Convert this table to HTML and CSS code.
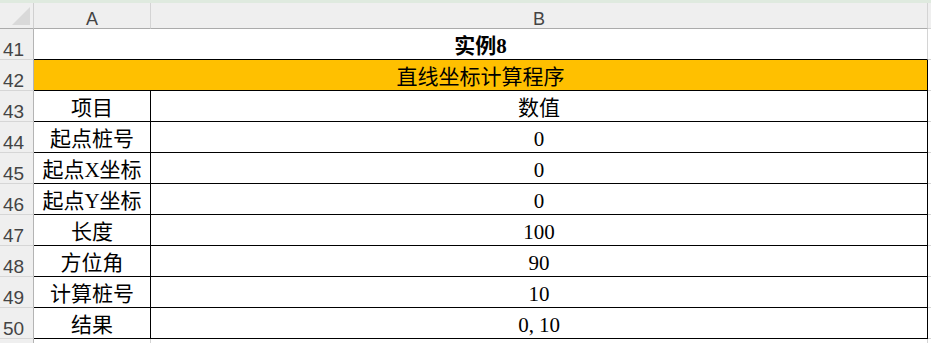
FILE: index.html
```html
<!DOCTYPE html>
<html lang="zh">
<head>
<meta charset="utf-8">
<title>直线坐标计算程序</title>
<link rel="stylesheet" href="styles.css">
</head>
<body>
<div class="strip"></div>
<div class="sheet">
  <div class="corner">
    <svg class="corner-tri" width="33" height="25" viewBox="0 0 33 25"><polygon points="30,4 30,22 12,22" fill="#d9d9d9"/></svg>
  </div>
  <div class="colhead">A</div>
  <div class="colhead">B</div>
  <div class="colhead rest"></div>

  <div class="rowhead">41</div>
  <div class="cell merged row41 bold">实例8</div>
  <div class="cell rest"></div>

  <div class="rowhead">42</div>
  <div class="cell merged row42">直线坐标计算程序</div>
  <div class="cell rest"></div>

  <div class="rowhead">43</div>
  <div class="cell boxed">项目</div>
  <div class="cell boxed">数值</div>
  <div class="cell rest"></div>

  <div class="rowhead">44</div>
  <div class="cell boxed">起点桩号</div>
  <div class="cell boxed">0</div>
  <div class="cell rest"></div>

  <div class="rowhead">45</div>
  <div class="cell boxed">起点X坐标</div>
  <div class="cell boxed">0</div>
  <div class="cell rest"></div>

  <div class="rowhead">46</div>
  <div class="cell boxed">起点Y坐标</div>
  <div class="cell boxed">0</div>
  <div class="cell rest"></div>

  <div class="rowhead">47</div>
  <div class="cell boxed">长度</div>
  <div class="cell boxed">100</div>
  <div class="cell rest"></div>

  <div class="rowhead">48</div>
  <div class="cell boxed">方位角</div>
  <div class="cell boxed">90</div>
  <div class="cell rest"></div>

  <div class="rowhead">49</div>
  <div class="cell boxed">计算桩号</div>
  <div class="cell boxed">10</div>
  <div class="cell rest"></div>

  <div class="rowhead">50</div>
  <div class="cell boxed">结果</div>
  <div class="cell boxed">0<span class="comma">,</span>10</div>
  <div class="cell rest"></div>

  <div class="rowhead"></div>
  <div class="cell plain"></div>
  <div class="cell plain"></div>
  <div class="cell rest"></div>
</div>
</body>
</html>
```

FILE: styles.css
```css
html, body {
  margin: 0;
  padding: 0;
  background: #ffffff;
  overflow: hidden;
}

.strip {
  height: 3px;
  background: #dfeadf;
}

.sheet {
  display: grid;
  grid-template-columns: 34px 117px 777px 1fr;
  grid-template-rows: 26px repeat(10, 31px) 20px;
  width: 931px;
}

.corner {
  background: #efefef;
  border-right: 1px solid #d0d0d0;
  border-bottom: 1px solid #ababab;
  box-sizing: border-box;
}

.corner-tri {
  display: block;
}

.colhead {
  background: #efefef;
  border-right: 1px solid #d4d4d4;
  border-bottom: 1px solid #ababab;
  box-sizing: border-box;
  display: flex;
  align-items: flex-end;
  justify-content: center;
  font-family: "Liberation Sans", Arial, sans-serif;
  font-size: 18px;
  line-height: 18px;
  color: #444444;
}

.colhead.rest {
  border-right: none;
}

.rowhead {
  background: #efefef;
  border-right: 1px solid #b4b4b4;
  border-bottom: 1px solid #d6d6d6;
  box-sizing: border-box;
  display: flex;
  align-items: flex-end;
  justify-content: flex-start;
  padding-left: 3px;
  font-family: "Liberation Sans", Arial, sans-serif;
  font-size: 19px;
  line-height: 19px;
  color: #444444;
}

.cell {
  box-sizing: border-box;
  display: flex;
  align-items: flex-end;
  justify-content: center;
  font-family: "Liberation Serif", "Noto Sans CJK SC", serif;
  font-size: 21px;
  line-height: 25px;
  color: #000000;
  white-space: nowrap;
}

.merged {
  grid-column: span 2;
}

.row41 {
  border-right: 1px solid #d4d4d4;
  border-bottom: 1px solid #000000;
}

.bold {
  font-weight: bold;
}

.row42 {
  background: #ffc000;
  border-right: 1px solid #000000;
  border-bottom: 1px solid #000000;
}

.boxed {
  border-right: 1px solid #000000;
  border-bottom: 1px solid #000000;
}

.plain {
  border-right: 1px solid #d4d4d4;
  border-bottom: 1px solid #d4d4d4;
}

.rest {
  border-bottom: 1px solid #d4d4d4;
}

.comma {
  padding-right: 5px;
}
```
